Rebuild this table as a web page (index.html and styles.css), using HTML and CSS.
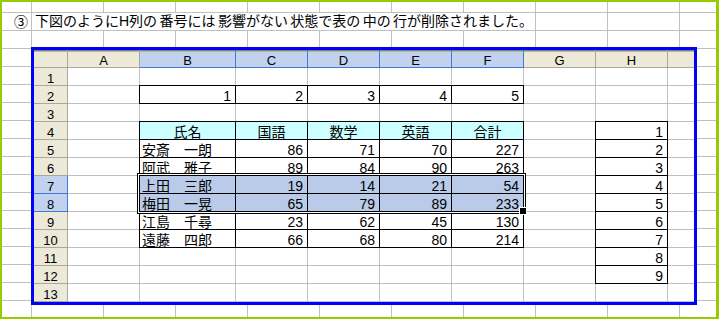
FILE: index.html
```html
<!DOCTYPE html>
<html lang="ja">
<head>
<meta charset="utf-8">
<title>Excel</title>
<link rel="stylesheet" href="styles.css">
</head>
<body>
<div class="frame">
  <div class="title">
    <div class="mark">③</div>
    <div class="text">下図のようにH列の 番号には 影響がない 状態で表の 中の 行が削除されました。</div>
  </div>
  <div class="sheet">
    <div class="ch corner"></div><div class="ch">A</div><div class="ch sel">B</div><div class="ch sel">C</div><div class="ch sel">D</div><div class="ch sel">E</div><div class="ch sel">F</div><div class="ch">G</div><div class="ch">H</div><div class="ch last"></div>

    <div class="rh">1</div><div class="c"></div><div class="c"></div><div class="c"></div><div class="c"></div><div class="c"></div><div class="c"></div><div class="c"></div><div class="c"></div><div class="c last"></div>

    <div class="rh">2</div><div class="c"></div><div class="c b n">1</div><div class="c b n">2</div><div class="c b n">3</div><div class="c b n">4</div><div class="c b n">5</div><div class="c"></div><div class="c"></div><div class="c last"></div>

    <div class="rh">3</div><div class="c"></div><div class="c"></div><div class="c"></div><div class="c"></div><div class="c"></div><div class="c"></div><div class="c"></div><div class="c"></div><div class="c last"></div>

    <div class="rh">4</div><div class="c"></div><div class="c b hd">氏名</div><div class="c b hd">国語</div><div class="c b hd">数学</div><div class="c b hd">英語</div><div class="c b hd">合計</div><div class="c"></div><div class="c b n">1</div><div class="c last"></div>

    <div class="rh">5</div><div class="c"></div><div class="c b">安斎　一朗</div><div class="c b n">86</div><div class="c b n">71</div><div class="c b n">70</div><div class="c b n">227</div><div class="c"></div><div class="c b n">2</div><div class="c last"></div>

    <div class="rh">6</div><div class="c"></div><div class="c b">阿武　雅子</div><div class="c b n">89</div><div class="c b n">84</div><div class="c b n">90</div><div class="c b n">263</div><div class="c"></div><div class="c b n">3</div><div class="c last"></div>

    <div class="rh sel">7</div><div class="c"></div><div class="c b s">上田　三郎</div><div class="c b n s">19</div><div class="c b n s">14</div><div class="c b n s">21</div><div class="c b n s">54</div><div class="c"></div><div class="c b n">4</div><div class="c last"></div>

    <div class="rh sel">8</div><div class="c"></div><div class="c b s">梅田　一晃</div><div class="c b n s">65</div><div class="c b n s">79</div><div class="c b n s">89</div><div class="c b n s">233</div><div class="c"></div><div class="c b n">5</div><div class="c last"></div>

    <div class="rh">9</div><div class="c"></div><div class="c b">江島　千尋</div><div class="c b n">23</div><div class="c b n">62</div><div class="c b n">45</div><div class="c b n">130</div><div class="c"></div><div class="c b n">6</div><div class="c last"></div>

    <div class="rh">10</div><div class="c"></div><div class="c b">遠藤　四郎</div><div class="c b n">66</div><div class="c b n">68</div><div class="c b n">80</div><div class="c b n">214</div><div class="c"></div><div class="c b n">7</div><div class="c last"></div>

    <div class="rh">11</div><div class="c"></div><div class="c"></div><div class="c"></div><div class="c"></div><div class="c"></div><div class="c"></div><div class="c"></div><div class="c b n">8</div><div class="c last"></div>

    <div class="rh">12</div><div class="c"></div><div class="c"></div><div class="c"></div><div class="c"></div><div class="c"></div><div class="c"></div><div class="c"></div><div class="c b n">9</div><div class="c last"></div>

    <div class="rh">13</div><div class="c"></div><div class="c"></div><div class="c"></div><div class="c"></div><div class="c"></div><div class="c"></div><div class="c"></div><div class="c"></div><div class="c last"></div>

    <div class="selection"></div>
  </div>
</div>
</body>
</html>
```
FILE: styles.css
```css
* { box-sizing: border-box; }
html, body { margin: 0; padding: 0; }
body {
  width: 719px;
  height: 319px;
  overflow: hidden;
  background: #fff;
  color: #000;
  font-family: "Liberation Sans", "Noto Sans CJK JP", sans-serif;
  font-size: 14px;
}
.frame {
  width: 719px;
  height: 319px;
  border: 2px solid #99cc00;
  border-right-width: 3px;
  padding-top: 11px;
  background-color: #fff;
  background-image:
    linear-gradient(to right, #c0c0c0 1px, transparent 1px),
    linear-gradient(to bottom, #c0c0c0 1px, transparent 1px);
  background-size: 72px 18px;
  background-position: 29px 10px;
}
.title {
  display: flex;
  height: 17px;
  line-height: 17px;
}
.mark {
  width: 29px;
  background: #fff;
  text-align: right;
  padding-right: 3px;
  font-family: "Noto Sans CJK JP", sans-serif;
}
.text {
  margin-left: 1px;
  width: 503px;
  background: #fff;
  padding-left: 3px;
  white-space: nowrap;
  word-spacing: -1.5px;
}
.sheet {
  position: relative;
  margin-left: 29px;
  margin-top: 17px;
  width: 666px;
  height: 258px;
  border: 3px solid #0000ff;
  background: #fff;
  display: grid;
  grid-template-columns: 34px 72px 96px repeat(6, 72px) 26px;
  grid-template-rows: repeat(14, 18px);
}
.c {
  border-right: 1px solid #c0c0c0;
  border-bottom: 1px solid #c0c0c0;
  padding: 0 2px;
  line-height: 20px;
  white-space: nowrap;
}
.last { border-right: 0; }
.n { text-align: right; padding-right: 4px; }
.b { position: relative; }
.b::after {
  content: "";
  position: absolute;
  left: -1px;
  top: -1px;
  right: -1px;
  bottom: -1px;
  border: 1px solid #000;
  pointer-events: none;
}
.hd { background: #ccffff; text-align: center; }
.s { background: #b9cbe8; }
.ch, .rh {
  background: #ece9d8;
  border-right: 1px solid #aca899;
  border-bottom: 1px solid #aca899;
  text-align: center;
  font-size: 13px;
}
.ch {
  line-height: 21px;
  box-shadow: inset 0 1px 0 #7f7f7f, inset 0 2px 0 #b8b6ab;
}
.rh { line-height: 22px; }
.ch.sel, .rh.sel {
  background: #c2d2ee;
  border-right-color: #3f7ad6;
  border-bottom-color: #3f7ad6;
}
.ch.last { border-right: 0; }
.selection {
  grid-column: 3 / 8;
  grid-row: 8 / 10;
  position: absolute;
  top: -3px;
  left: -3px;
  right: -2px;
  bottom: -2px;
  z-index: 2;
  border: 1px solid #000;
  box-shadow: inset 0 0 0 1px #fff;
  pointer-events: none;
}
.selection::after {
  content: "";
  position: absolute;
  right: -2px;
  bottom: -2px;
  width: 6px;
  height: 6px;
  background: #000;
  border: 1px solid #fff;
}
```
